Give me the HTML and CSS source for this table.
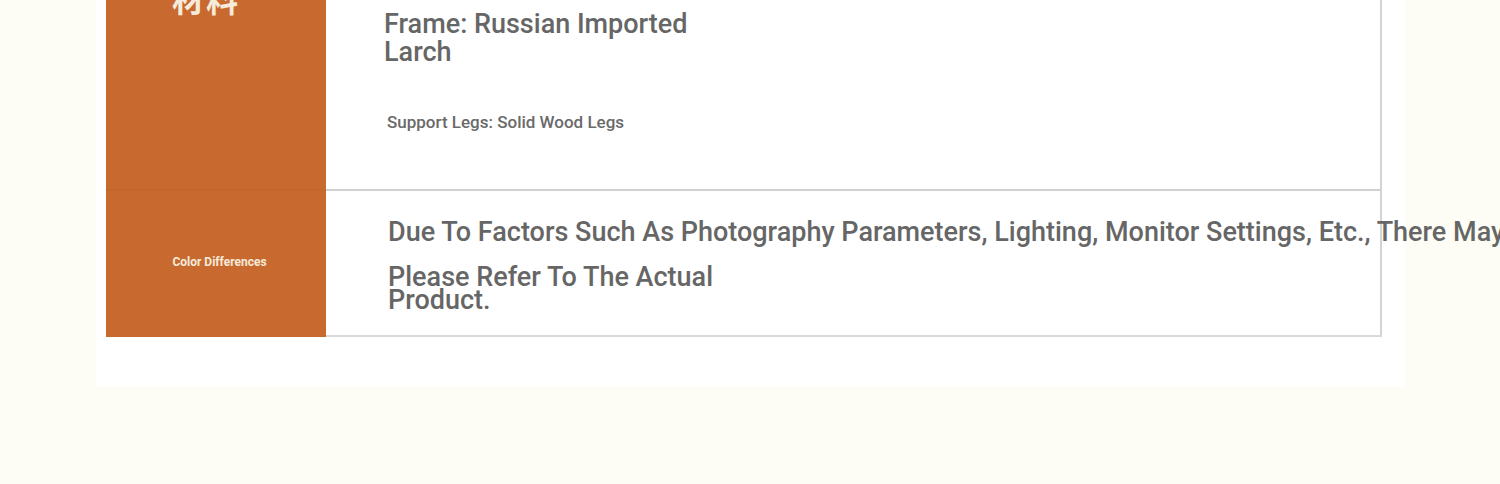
FILE: index.html
```html
<!DOCTYPE html>
<html lang="en">
<head>
<meta charset="utf-8">
<title>Product Details</title>
<link rel="stylesheet" href="styles.css">
</head>
<body>
<div class="panel">
  <div class="spec-table">
    <div class="row row-material">
      <div class="label-cell label-top"><span class="label-cn">材料</span></div>
      <div class="value-cell value-material">
        <p class="frame">Frame: Russian Imported Larch</p>
        <p class="legs">Support Legs: Solid Wood Legs</p>
      </div>
    </div>
    <div class="row row-color">
      <div class="label-cell label-center"><span class="label-en">Color Differences</span></div>
      <div class="value-cell value-color">
        <p class="note-line">Due To Factors Such As Photography Parameters, Lighting, Monitor Settings, Etc., There May Be Slight Color Differences.</p>
        <p class="note-wrap">Please Refer To The Actual Product.</p>
      </div>
    </div>
  </div>
</div>
</body>
</html>
```

FILE: styles.css
```css
html, body {
  margin: 0;
  padding: 0;
}
body {
  background: #fdfdf6;
  font-family: Roboto, "Noto Sans", "Noto Sans CJK SC", sans-serif;
  overflow: hidden;
  height: 484px;
}
p { margin: 0; }

.panel {
  width: 1276px;
  margin: -40px 0 0 96px;
  padding: 0 24px 50px 10px;
  background: #ffffff;
}

.spec-table {
  width: 1276px;
}

.row {
  display: grid;
  grid-template-columns: 220px minmax(0, 1fr);
}
.row-material { height: 229px; }
.row-color { height: 148px; }

.label-cell {
  background: #c86a2f;
  color: #f6eadb;
}
.label-top {
  display: flex;
  justify-content: center;
  padding-top: 22px;
  box-sizing: border-box;
  padding-right: 20px;
}
.label-cn {
  font-family: "Noto Sans CJK SC", sans-serif;
  font-size: 32px;
  line-height: 32px;
  font-weight: 700;
  letter-spacing: 2px;
}
.label-center {
  display: flex;
  align-items: center;
  justify-content: center;
  padding-left: 7px;
  padding-bottom: 4px;
  box-sizing: border-box;
  border-top: 2px solid #c1672f;
}
.label-en {
  font-size: 12px;
  font-weight: 700;
  line-height: 14px;
}

.value-cell {
  background: #ffffff;
  color: #666666;
  border-right: 2px solid #d3d3d3;
  box-sizing: border-box;
  overflow: visible;
}
.value-material {
  padding: 50px 0 0 58px;
}
.frame {
  font-size: 27px;
  font-weight: 500;
  line-height: 28px;
  width: 330px;
}
.legs {
  font-size: 17px;
  font-weight: 500;
  line-height: 20px;
  margin-top: 46px;
  padding-left: 3px;
  color: #6a6a6a;
}

.value-color {
  border-top: 2px solid #d0d0d0;
  border-bottom: 2px solid #dadada;
  padding: 27px 0 0 62px;
}
.note-line {
  font-size: 27px;
  font-weight: 500;
  line-height: 28px;
  white-space: nowrap;
}
.note-wrap {
  font-size: 27px;
  font-weight: 500;
  line-height: 23px;
  margin-top: 20px;
  width: 345px;
}
```
